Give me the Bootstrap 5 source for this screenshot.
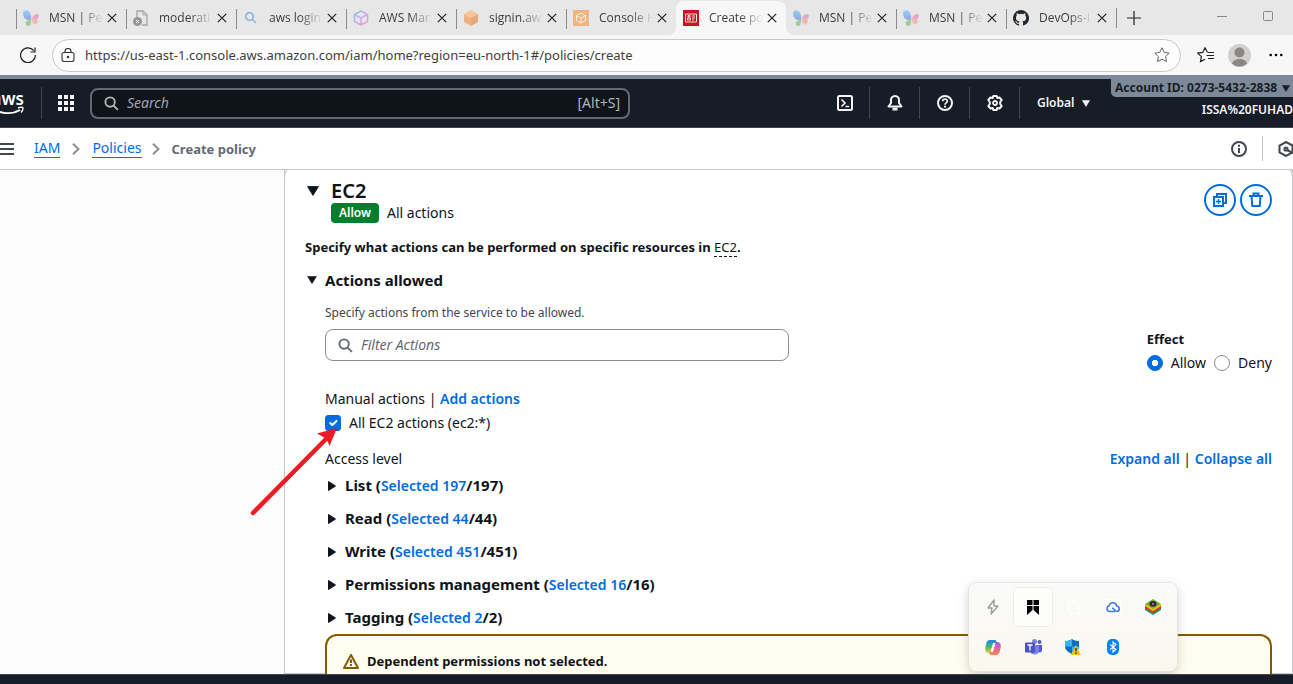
<!DOCTYPE html>
<html lang="en">
<head>
<meta charset="utf-8">
<meta name="viewport" content="width=device-width, initial-scale=1">
<title>Create policy</title>
<link rel="stylesheet" href="https://cdn.jsdelivr.net/npm/bootstrap@5.3.0/dist/css/bootstrap.min.css">
<style>
:root{--ink:#0f141a;--navy:#161d26;--blue:#006ce0;--line:#c6c6cd;--grey:#424650}
body{font:14px/20px "Noto Sans",sans-serif;color:var(--ink);background:#fff}
.app{height:100vh;overflow:hidden}
.app>*{flex-shrink:0}
.app>main{flex-shrink:1;min-height:0}
svg{display:block;flex:none}
.chrome{font-family:"Open Sans",sans-serif;color:#3c3c3c}
button{color:inherit}
.plain{border:0;background:none;padding:0;display:flex;align-items:center}
/* browser tabs */
.tabs{height:35px;background:#e7e7e7;padding-left:16px}
.tab{width:110px;height:34px;padding-left:7px;position:relative;font-size:12px}
.tab::before{content:"";position:absolute;left:0;top:8px;height:20px;border-left:1px solid #8b8b8b}
.tab.on::before,.tab.after::before{display:none}
.tab.on{background:#f7f7f7;border-radius:8px 8px 0 0;align-self:flex-end}
.tab.on::after{content:"";position:absolute;left:-8px;right:-8px;bottom:0;height:8px;
 background:radial-gradient(circle at 0 0,transparent 8px,#f7f7f7 8px) left/8px 8px no-repeat,radial-gradient(circle at 100% 0,transparent 8px,#f7f7f7 8px) right/8px 8px no-repeat}
.tab-name{width:58px;margin-left:10px;margin-right:-8px;white-space:nowrap;-webkit-mask:linear-gradient(90deg,#000 30px,transparent 54px);mask:linear-gradient(90deg,#000 30px,transparent 54px)}
.tab .fade-ico{opacity:.5}
.tab-end{border-left:1px solid #8b8b8b;height:20px;margin-right:10px}
.toolbar{height:40px;background:#f7f7f7;padding:0 10px 0 20px}
.omni{height:33px;border:1px solid #c8c8c8;border-radius:17px;background:#fdfdfd;padding:0 10px 0 8px}
.omni input{border:0;background:none;outline:0;font:13px "Noto Sans",sans-serif;color:#3f3f3f;min-width:0}
.me-person{margin:0 18px 0 14px}
/* console header */
.aws{height:53px;background:var(--navy);color:#f3f3f7;border-top:4px solid #7d8998;border-bottom:1px solid var(--grey)}
.aws-logo{width:25px;overflow:hidden;padding-right:1px}
.aws-word{font:600 17px/14px "Noto Sans",sans-serif}
.vline{border-left:1px solid #424650;height:32px}
.find{max-width:540px;height:31px;border:2px solid #656871;border-radius:8px;background:#0f141a;padding:0 8px 0 12px;color:#b4b4bb}
.find input,.filter input{border:0;outline:0;background:none;min-width:0;padding:0}
.find input::placeholder{color:#a4a4ad;font-style:italic;opacity:1}
.cell{width:50px;height:32px;justify-content:center;border-right:1px solid #424650}
.region{width:91px;padding-left:17px;font-size:12px;font-weight:600}
.acct{width:182px;font-size:12px;line-height:18px;font-weight:600}
.acct-id{background:#7d8998;color:var(--navy);border-radius:0 0 0 5px;padding:0 3px 0 4px;font-weight:700;white-space:nowrap}
/* breadcrumbs */
.crumbs{height:42px;border-bottom:1px solid var(--line)}
.crumbs a{color:var(--blue);text-decoration:none;border-bottom:1px solid var(--blue);line-height:18px}
.crumbs b{color:#656871;font-size:13px;margin-left:12px}
.crumbs .iam{margin:0 12px 0 20px}
.crumbs .pol{margin:0 10px 0 12px}
.crumbs .vr{margin:8px 15px}
/* editor */
.side{width:284px;background:#fcfcfd}
.editor{border:1px solid var(--line);border-top:0;position:relative;padding:8px 20px 0}
.editor::before{content:"";position:absolute;left:-1px;right:-1px;top:-8px;height:16px;border:1px solid var(--line);border-bottom:0;border-radius:16px 16px 0 0}
.fold{padding-left:2px}
.service{font:600 20px/25px "Noto Sans",sans-serif;margin:0}
.pill{background:#00802f;color:#fff;border-radius:4px;padding:0 8px;font-size:12px;font-weight:600;height:20px}
.tools{margin-top:6px}
.round{width:32px;height:32px;border:2px solid var(--blue);border-radius:50%;color:var(--blue);background:#fff;display:flex;align-items:center;justify-content:center;padding:0}
.t13{font:700 13px/22px "Noto Sans",sans-serif;margin:0}
.t15{font:700 15px/24px "Noto Sans",sans-serif;margin:0}
.specify{margin-top:13px}
.acts{margin-top:10px}
.acts .plain{width:20px;padding-left:2px}
.dash{font-weight:400;border-bottom:1px dashed var(--ink);text-decoration:none}
.body{padding:13px 0 0 20px}
.hint{font-size:12px;line-height:16px;color:var(--grey)}
.filter{width:49%;height:32px;border:1px solid #8c8c94;border-radius:8px;padding:0 12px}
.filter input::placeholder{color:#656871;font-style:italic;opacity:1}
.effect{line-height:20px}
.radios{padding-top:4px}
.manual{margin-top:16px}
.all{height:24px;margin-top:2px}
.access{margin-top:14px}
.link{color:var(--blue);font-size:14px;font-weight:600;text-decoration:none}
.form-check-input{width:16px;height:16px;margin:0;border-color:#8c8c94;flex:none}
.form-check-input:checked{background-color:var(--blue);border-color:var(--blue)}
.form-check-input[type=checkbox]{border-radius:3px}
.form-check-input[type=radio]:checked{background-image:radial-gradient(circle,#fff 3px,transparent 3px)}
.level{height:33px}
.tri{width:20px;padding-left:3px}
.warn{border:2px solid #855900;border-radius:12px 12px 0 0;border-bottom:0;background:#fffef0;height:60px;padding:14px 16px}
.foot{height:10px;background:var(--navy);border-top:1px solid var(--grey)}
.arrow{position:absolute;left:248px;top:256px}
.tray{position:absolute;right:116px;bottom:3px;width:208px;height:88px;border-radius:8px;background:linear-gradient(#fafafa,#faf8ee);box-shadow:0 0 1px 1px #e4e4e0,0 4px 12px #0003;display:grid;grid-template-columns:repeat(5,40px);grid-template-rows:40px 40px;padding:4px}
.tray>button{justify-content:center;border-radius:4px;margin:1px}
.tray>.sel{background:#fdfdfc;box-shadow:0 0 0 1px #eeede9}
</style>
</head>
<body>
<svg width="0" height="0" class="position-absolute" aria-hidden="true">
<defs>
<linearGradient id="g1" x1="0" y1="0" x2="0" y2="1"><stop offset="0" stop-color="#3cc0ee"/><stop offset=".6" stop-color="#4a80f0"/><stop offset="1" stop-color="#3a6fe0"/></linearGradient>
<linearGradient id="g2" x1="1" y1="0" x2="0" y2="1"><stop offset="0" stop-color="#b56ff0"/><stop offset=".4" stop-color="#f0609c"/><stop offset="1" stop-color="#ffd060"/></linearGradient>
<linearGradient id="g3" x1="0" y1="0" x2="1" y2="1"><stop offset="0" stop-color="#20b8f0"/><stop offset=".5" stop-color="#b070f0"/><stop offset="1" stop-color="#ff5aa0"/></linearGradient>
<linearGradient id="g4" x1="0" y1="0" x2="0" y2="1"><stop offset="0" stop-color="#1a87e0"/><stop offset=".5" stop-color="#3cb878"/><stop offset="1" stop-color="#f0d020"/></linearGradient>
<linearGradient id="g5" x1="0" y1="0" x2="0" y2="1"><stop offset="0" stop-color="#a05ae8"/><stop offset=".5" stop-color="#f0609c"/><stop offset="1" stop-color="#ff8a50"/></linearGradient>
<symbol id="x" viewBox="0 0 10 10"><path d="M.8.8l8.4 8.4M9.2.8L.8 9.2" stroke="#222" stroke-width="1.2"/></symbol>
<symbol id="msn" viewBox="0 0 16 16"><path d="M0 3C0-.5 4-.5 6 1.500c2 2 2.500 6 2 9L5 10C1 9 0 6 0 3z" fill="url(#g1)"/><path d="M8.500 11c-.5-3 2.500-7 5.500-7 3 0 2.500 4.500-1 5 2 .5 2 3.500 1 4.500-2 2-5 .5-5.500-2.500z" fill="url(#g2)"/><path d="M3 12c1-2 3-2 5-1.500 0 3-.5 5.500-2.500 5.500S2 14 3 12z" fill="#52b848"/></symbol>
<symbol id="find" viewBox="0 0 16 16"><circle cx="6.500" cy="6.500" r="5" fill="none" stroke="currentColor" stroke-width="2"/><path d="M10.200 10.200l4.600 4.600" stroke="currentColor" stroke-width="2"/></symbol>
<symbol id="down" viewBox="0 0 12 10"><path d="M.5.5h11L6 9.500z" fill="currentColor" stroke="currentColor" stroke-linejoin="round" stroke-width=".8"/></symbol>
<symbol id="right" viewBox="0 0 8 10"><path d="M.5.500v9L7.500 5z" fill="currentColor" stroke="currentColor" stroke-linejoin="round"/></symbol>
<symbol id="chev" viewBox="0 0 8 12"><path d="M1 .8L6.500 6 1 11.200" fill="none" stroke="#8c8c94" stroke-width="2"/></symbol>
</defs>
</svg>

<div class="app d-flex flex-column">
<div class="chrome">
 <div class="tabs d-flex align-items-center">
  <div class="tab d-flex align-items-center"><svg class="fade-ico" width="16" height="16"><use href="#msn"/></svg><span class="tab-name">MSN | Pe</span><button class="plain ms-2" aria-label="Close"><svg width="10" height="10"><use href="#x"/></svg></button></div>
  <div class="tab d-flex align-items-center"><svg width="16" height="16" viewBox="0 0 16 16"><path d="M4 7V1h6l4 4v10H9" fill="none" stroke="#a5a5a5" stroke-width="1.300"/><path d="M10 1v4h4" fill="none" stroke="#a5a5a5"/><circle cx="4.500" cy="11.500" r="4.500" fill="#969696"/><path d="M3 10l3 3m0-3l-3 3" stroke="#fff"/></svg><span class="tab-name">moderati</span><button class="plain ms-2" aria-label="Close"><svg width="10" height="10"><use href="#x"/></svg></button></div>
  <div class="tab d-flex align-items-center"><svg width="16" height="16" viewBox="0 0 16 16" fill="none" stroke="#86b8e3" stroke-width="1.700"><circle cx="6.500" cy="6.500" r="3.800"/><path d="M9.500 9.500L13 13"/></svg><span class="tab-name">aws login</span><button class="plain ms-2" aria-label="Close"><svg width="10" height="10"><use href="#x"/></svg></button></div>
  <div class="tab d-flex align-items-center"><svg class="fade-ico" width="16" height="16" viewBox="0 0 16 16"><path d="M8 1l6.500 3.500v7L8 15l-6.500-3.500v-7zM1.500 4.500L8 8l6.500-3.500M8 8v7" fill="none" stroke="url(#g3)" stroke-width="1.600" stroke-linejoin="round"/></svg><span class="tab-name">AWS Mar</span><button class="plain ms-2" aria-label="Close"><svg width="10" height="10"><use href="#x"/></svg></button></div>
  <div class="tab d-flex align-items-center"><svg width="16" height="16" viewBox="0 0 16 16"><path d="M8 0l7 4-7 4-7-4z" fill="#f3c797"/><path d="M1 4l7 4v8l-7-4z" fill="#efb27e"/><path d="M15 4L8 8v8l7-4z" fill="#e9a877"/></svg><span class="tab-name">signin.aw</span><button class="plain ms-2" aria-label="Close"><svg width="10" height="10"><use href="#x"/></svg></button></div>
  <div class="tab d-flex align-items-center"><svg width="16" height="16" viewBox="0 0 16 16"><path d="M0 0h16v16H0z" fill="#efb580"/><path d="M8 3l4.500 2.500v5L8 13l-4.500-2.500v-5zM3.500 5.500L8 8l4.500-2.500M8 8v5" fill="none" stroke="#fff" stroke-opacity=".8"/></svg><span class="tab-name">Console H</span><button class="plain ms-2" aria-label="Close"><svg width="10" height="10"><use href="#x"/></svg></button></div>
  <div class="tab on d-flex align-items-center"><svg width="16" height="16" viewBox="0 0 16 16"><path d="M0 0h16v16H0z" fill="#cf1124"/><path d="M2.500 4h11v8h-11zM4.500 10V8h3v2zM5 5.500h2V7H5zM9 6h3M9 8h3M9 10h2" fill="none" stroke="#fff" stroke-opacity=".85"/></svg><span class="tab-name">Create po</span><button class="plain ms-2" aria-label="Close"><svg width="10" height="10"><use href="#x"/></svg></button></div>
  <div class="tab after d-flex align-items-center"><svg class="fade-ico" width="16" height="16"><use href="#msn"/></svg><span class="tab-name">MSN | Pe</span><button class="plain ms-2" aria-label="Close"><svg width="10" height="10"><use href="#x"/></svg></button></div>
  <div class="tab d-flex align-items-center"><svg class="fade-ico" width="16" height="16"><use href="#msn"/></svg><span class="tab-name">MSN | Pe</span><button class="plain ms-2" aria-label="Close"><svg width="10" height="10"><use href="#x"/></svg></button></div>
  <div class="tab d-flex align-items-center"><svg width="16" height="16" viewBox="0 0 16 16"><path fill="#24292f" d="M8 0a8 8 0 0 0-2.530 15.590c.4.070.55-.17.550-.38v-1.490c-2.010.37-2.530-.49-2.690-.94-.09-.23-.48-.94-.82-1.130-.28-.15-.68-.52-.01-.53.63-.01 1.080.58 1.230.82.72 1.210 1.870.87 2.330.66.070-.52.280-.87.510-1.070-1.780-.2-3.640-.89-3.640-3.950 0-.87.310-1.590.82-2.150-.08-.2-.36-1.020.08-2.120 0 0 .67-.21 2.200.82a7.600 7.600 0 0 1 4 0c1.530-1.040 2.200-.82 2.200-.82.44 1.100.160 1.920.08 2.120.51.56.82 1.270.82 2.150 0 3.070-1.870 3.750-3.650 3.950.29.25.54.730.54 1.480v2.200c0 .21.150.46.55.38A8 8 0 0 0 8 0z"/></svg><span class="tab-name">DevOps-I</span><button class="plain ms-2" aria-label="Close"><svg width="10" height="10"><use href="#x"/></svg></button></div>
  <div class="tab-end"></div>
  <button class="plain" aria-label="New tab"><svg width="14" height="14" viewBox="0 0 14 14"><path d="M7 0v14M0 7h14" stroke="#222" stroke-width="1.200"/></svg></button>
  <div class="d-flex ms-auto me-3 pe-1 pb-1 align-items-center"><button class="plain me-4" aria-label="Minimize"><svg width="10" height="10"><path d="M0 5.500h10" stroke="#888"/></svg></button><button class="plain ms-2 ps-1" aria-label="Maximize"><svg width="10" height="10"><rect x=".5" y=".5" width="9" height="9" rx="1" fill="none" stroke="#888"/></svg></button></div>
 </div>
 <div class="toolbar d-flex align-items-center">
  <button class="plain me-3" aria-label="Refresh"><svg width="16" height="16" viewBox="0 0 16 16" fill="none" stroke="#222" stroke-width="1.200"><path d="M13.800 3.600A7.400 7.400 0 1 0 15.400 8M15 .5V5h-4.500"/></svg></button>
  <div class="omni d-flex align-items-center flex-grow-1">
   <svg width="14" height="14" viewBox="0 0 14 14" fill="none" stroke="#333" stroke-width="1.100"><rect x="1" y="4.500" width="12" height="9" rx="2"/><path d="M4 4.500V3.500a3 3 0 0 1 6 0v1"/><circle cx="7" cy="9" r=".7" fill="#333"/></svg>
   <input class="flex-grow-1 ms-2" aria-label="Address" value="https://us-east-1.console.aws.amazon.com/iam/home?region=eu-north-1#/policies/create">
   <button class="plain" aria-label="Favorite"><svg width="16" height="16" viewBox="0 0 16 16"><path d="M8 .8l2.200 4.600 5 .7-3.600 3.500.9 5L8 12.200l-4.500 2.400.9-5L.8 6.100l5-.7z" fill="none" stroke="#666"/></svg></button>
  </div>
  <button class="plain ms-3" aria-label="Favorites"><svg width="17" height="16" viewBox="0 0 17 16" fill="none" stroke="#222" stroke-width="1.200"><path d="M10.500 5.500L8 .8 5.700 5.400.8 6.100l3.600 3.500-.9 5L8 12.200M11 5.500h6M9.500 8.500H17M11 11.500h6"/></svg></button>
  <button class="plain me-person" aria-label="Profile"><svg width="23" height="23" viewBox="0 0 23 23"><circle cx="11.500" cy="11.500" r="11.500" fill="#d2d0ce"/><circle cx="11.500" cy="8.500" r="5" fill="#8a8886"/><path d="M4 19.800c1-6.400 14-6.400 15 0a11.500 11.500 0 0 1-15 0z" fill="#8a8886"/></svg></button>
  <button class="plain" aria-label="Settings"><svg width="14" height="4"><circle cx="1.700" cy="2" r="1.300"/><circle cx="7" cy="2" r="1.300"/><circle cx="12.300" cy="2" r="1.300"/></svg></button>
 </div>
</div>

<header class="aws d-flex">
 <div class="d-flex align-items-center flex-grow-1">
  <a href="#" class="aws-logo d-flex flex-column align-items-end text-decoration-none text-white"><span class="aws-word">aws</span><svg width="34" height="9" viewBox="0 0 34 9" fill="none" stroke="#fff"><path d="M2 2c9 6.500 20 6.500 28 2" stroke-width="1.800"/><path d="M28 2c2-1 5-1 5 0s-.5 3-2 4.500" stroke-width="1.400"/></svg></a>
  <div class="vline ms-3"></div>
  <button class="plain ms-3" aria-label="Services"><svg width="16" height="16" fill="#f3f3f7"><path d="M0 0h4v4H0zM6 0h4v4H6zM12 0h4v4h-4zM0 6h4v4H0zM6 6h4v4H6zM12 6h4v4h-4zM0 12h4v4H0zM6 12h4v4H6zM12 12h4v4h-4z"/></svg></button>
  <div class="find d-flex align-items-center flex-grow-1 ms-3"><svg width="15" height="15"><use href="#find"/></svg><input class="flex-grow-1 ms-2" type="search" placeholder="Search" aria-label="Search"><span>[Alt+S]</span></div>
 </div>
 <div class="d-flex align-items-center">
  <button class="plain cell" aria-label="CloudShell"><svg width="16" height="16" viewBox="0 0 16 16" fill="none" stroke="currentColor" stroke-width="2"><rect x="1" y="1" width="14" height="14" rx="1.500"/><path d="M4.500 4.500L8 8l-3.500 3.500M8.500 11.500H12" stroke-width="1.700"/></svg></button>
  <button class="plain cell" aria-label="Notifications"><svg width="16" height="16" viewBox="0 0 16 16" fill="none" stroke="currentColor" stroke-width="2" stroke-linejoin="round"><path d="M8 1C5.500 1 4 3 4 5v3l-2.500 3.500h13L12 8V5c0-2-1.500-4-4-4z"/><path d="M5.500 14h5" stroke-width="3"/></svg></button>
  <button class="plain cell" aria-label="Help"><svg width="16" height="16" viewBox="0 0 16 16" fill="none" stroke="currentColor" stroke-width="2"><circle cx="8" cy="8" r="7"/><path d="M5.700 6.300C5.700 3.500 10.400 3.500 10.300 6.200 10.200 8 8 7.700 8 9.700" stroke-width="1.700"/><path d="M8 10.800v1.700"/></svg></button>
  <button class="plain cell" aria-label="Settings"><svg width="16" height="16" viewBox="0 0 16 16" fill="none" stroke="currentColor" stroke-width="2" stroke-linejoin="round"><path d="M6.300 1h3.400l.5 2 2.300-.5L14.700 5l-1.500 2v2l1.500 2-2.200 2.500-2.300-.5-.5 2H6.300l-.5-2-2.300.5L1.300 11l1.500-2V7L1.300 5l2.200-2.500 2.300.5z"/><circle cx="8" cy="8" r="2" stroke-width="1.800"/></svg></button>
  <button class="plain region">Global<svg class="ms-2" width="8" height="7"><use href="#down"/></svg></button>
 </div>
 <div class="acct"><div class="acct-id d-flex align-items-center justify-content-between">Account ID: 0273-5432-2838<svg width="8" height="7"><use href="#down"/></svg></div><div class="text-end mt-1">ISSA%20FUHAD</div></div>
</header>

<nav class="crumbs d-flex align-items-center" aria-label="breadcrumb">
 <button class="plain" aria-label="Menu"><svg width="14" height="12"><path d="M0 1h14M0 6h14M0 11h14" stroke="#424650" stroke-width="2"/></svg></button>
 <a href="#" class="iam">IAM</a><svg width="8" height="12"><use href="#chev"/></svg><a href="#" class="pol">Policies</a><svg width="8" height="12"><use href="#chev"/></svg><b>Create policy</b>
 <button class="plain ms-auto" aria-label="Info"><svg width="16" height="16" viewBox="0 0 16 16" fill="none" stroke="#424650" stroke-width="2"><circle cx="8" cy="8" r="7"/><path d="M8 3.800v2M8 7v5"/></svg></button>
 <div class="vr"></div>
 <button class="plain overflow-hidden" aria-label="Diagnostics"><svg width="15" height="16" viewBox="0 0 15 16" fill="none" stroke="#424650" stroke-width="2"><path d="M14.500 4.500L8 1 1.500 4.500v7L8 15l6.500-3.500z"/><circle cx="8" cy="8" r="1.600"/><path d="M9 9l6 3"/></svg></button>
</nav>

<main class="d-flex flex-grow-1 overflow-hidden position-relative">
 <div class="side flex-shrink-0"></div>
 <section class="editor flex-grow-1">
  <div class="d-flex justify-content-between">
   <div class="d-flex">
    <button class="plain fold align-self-start mt-2" aria-label="Collapse EC2"><svg class="me-2" width="12" height="10"><use href="#down"/></svg></button>
    <div class="ms-1"><h2 class="service">EC2</h2><div class="d-flex align-items-center"><span class="pill">Allow</span><span class="ms-2">All actions</span></div></div>
   </div>
   <div class="tools d-flex gap-1"><button class="round" aria-label="Clone"><svg width="14" height="14" viewBox="0 0 14 14" fill="none" stroke="currentColor" stroke-width="2"><path d="M4 3V1h9v9h-2"/><path d="M1 4h9v9H1z"/><path d="M5.500 6v5M3 8.500h5" stroke-width="1.500"/></svg></button><button class="round" aria-label="Delete"><svg width="14" height="16" viewBox="0 0 14 16" fill="none" stroke="currentColor" stroke-width="2"><path d="M0 4h14M4.500 4V1.500h5V4M2.500 4.500l.8 9.500h7.400l.8-9.500"/></svg></button></div>
  </div>
  <p class="t13 specify">Specify what actions can be performed on specific resources in <a href="#" class="dash text-reset">EC2</a>.</p>
  <h3 class="t15 d-flex align-items-center acts"><button class="plain" aria-label="Collapse actions"><svg width="10" height="8"><use href="#down"/></svg></button>Actions allowed</h3>
  <div class="body">
   <label class="hint d-block" for="filter">Specify actions from the service to be allowed.</label>
   <div class="d-flex justify-content-between align-items-start mt-2">
    <div class="filter d-flex align-items-center"><svg width="15" height="15" color="#656871"><use href="#find"/></svg><input id="filter" class="flex-grow-1 ms-2" placeholder="Filter Actions"></div>
    <fieldset><legend class="t13 effect">Effect</legend>
     <div class="d-flex align-items-center radios"><input class="form-check-input" type="radio" name="effect" id="allow" checked><label for="allow" class="mx-2">Allow</label><input class="form-check-input" type="radio" name="effect" id="deny"><label for="deny" class="ms-2">Deny</label></div></fieldset>
   </div>
   <div class="manual">Manual actions | <a href="#" class="link">Add actions</a></div>
   <div class="d-flex align-items-center all"><input class="form-check-input" type="checkbox" id="all" checked><label for="all" class="ms-2">All EC2 actions (ec2:*)</label></div>
   <div class="d-flex justify-content-between access"><span>Access level</span><span><a href="#" class="link">Expand all</a> | <a href="#" class="link">Collapse all</a></span></div>
   <div class="level t15 d-flex align-items-center"><button class="plain tri" aria-label="Expand List"><svg width="8" height="10"><use href="#right"/></svg></button><span>List (<a href="#" class="link">Selected 197</a>/197)</span></div>
   <div class="level t15 d-flex align-items-center"><button class="plain tri" aria-label="Expand Read"><svg width="8" height="10"><use href="#right"/></svg></button><span>Read (<a href="#" class="link">Selected 44</a>/44)</span></div>
   <div class="level t15 d-flex align-items-center"><button class="plain tri" aria-label="Expand Write"><svg width="8" height="10"><use href="#right"/></svg></button><span>Write (<a href="#" class="link">Selected 451</a>/451)</span></div>
   <div class="level t15 d-flex align-items-center"><button class="plain tri" aria-label="Expand Permissions management"><svg width="8" height="10"><use href="#right"/></svg></button><span>Permissions management (<a href="#" class="link">Selected 16</a>/16)</span></div>
   <div class="level t15 d-flex align-items-center"><button class="plain tri" aria-label="Expand Tagging"><svg width="8" height="10"><use href="#right"/></svg></button><span>Tagging (<a href="#" class="link">Selected 2</a>/2)</span></div>
   <div class="warn d-flex align-items-start t13"><svg class="me-2 mt-1" width="16" height="15" viewBox="0 0 16 15" fill="none" stroke="#855900" stroke-width="2" stroke-linejoin="round"><path d="M8 1l7 13H1z"/><path d="M8 5.500v3.500M8 10v2"/></svg>Dependent permissions not selected.</div>
  </div>
 </section>
 <svg class="arrow" width="92" height="94" viewBox="0 0 92 94"><path d="M5 87L79 12" stroke="#ed1c24" stroke-width="4.500" stroke-linecap="round"/><path d="M89 2L69 7.500l7 4 3.500 3.500 2 5z" fill="#ed1c24"/></svg>
 <div class="tray">
  <button class="plain" aria-label="Power"><svg width="12" height="16" viewBox="0 0 12 16"><path d="M7 1L1 9h4l-1 6 7-8H7z" fill="none" stroke="#a0a0a0" stroke-width="1.500" stroke-linejoin="round"/></svg></button>
  <button class="plain sel" aria-label="Bookmark app"><svg width="12" height="16"><path d="M0 1h5.500v5H0zM6.500 1H12v5H6.500zM0 7h5.500v4L0 16zM6.500 7H12v9l-5.500-5z"/></svg></button>
  <button class="plain" aria-label="Windows"><svg width="16" height="16" fill="none" stroke="#fff"><path d="M2.500 12V1.500H12M4.500 3.500h10v11h-10z"/></svg></button>
  <button class="plain" aria-label="Cloud"><svg width="16" height="16" viewBox="0 0 16 16"><rect width="16" height="16" rx="2" fill="#fff"/><path d="M10 12.500H4A3 3 0 0 1 4 6.800 4 4 0 0 1 11.800 7a2.800 2.800 0 0 1 .2 5.500c-2 0-2.500-3-5-3.500" fill="none" stroke="#3b78e7" stroke-width="1.600"/></svg></button>
  <button class="plain" aria-label="BlueStacks"><svg width="18" height="16" viewBox="0 0 18 16"><path d="M1 11l8 5 8-5V9H1z" fill="#15986e"/><path d="M1 9l8 5 8-5V7H1z" fill="#e4332b"/><path d="M1 7l8 5 8-5V5H1z" fill="#ffc20e"/><path d="M1 5l8-5 8 5-8 5z" fill="#72b626"/><ellipse cx="9" cy="4.800" rx="3.500" ry="2.800" fill="#2b2347"/><circle cx="9" cy="4.800" r="1.100" fill="#c268b6"/></svg></button>
  <button class="plain" aria-label="Copilot"><svg width="16" height="15" viewBox="0 0 16 15"><path d="M5 0h5c1 0 1.500 1 2 3H8L6 11c-.5 2-1 2-2 2-3 0-4.500-2-3.500-6s1-7 4.500-7z" fill="url(#g4)"/><path d="M11 15H6c-1 0-1.500-1-2-3h4l2-8c.5-2 1-2 2-2 3 0 4.500 2 3.500 6s-1 7-4.500 7z" fill="url(#g5)"/><path d="M8 5h2L8 10H6z" fill="#fff"/></svg></button>
  <button class="plain" aria-label="Teams"><svg width="17" height="16" viewBox="0 0 17 16"><circle cx="14.500" cy="3" r="2" fill="#5059c9"/><circle cx="9.500" cy="2.500" r="2.500" fill="#7b83eb"/><path d="M12 6h5v5c0 2-2 3-4 2z" fill="#5059c9"/><path d="M5 6h9v5c0 6-9 6-9 0z" fill="#7b83eb"/><rect y="3.500" width="10" height="10" rx="1" fill="#4b53bc"/><path d="M2.500 6h5M5 6v5.500" stroke="#fff" stroke-width="1.300"/></svg></button>
  <button class="plain" aria-label="Windows Security"><svg width="16" height="16" viewBox="0 0 16 16"><path d="M7 0c2 1.500 4 2 7 2v5c0 4-3 6-7 8-4-2-7-4-7-8V2c3 0 5-.5 7-2z" fill="#0f6cbd"/><path d="M7 0v7.500H0V2c3 0 5-.5 7-2zM7 7.500h7c0 4-3 6-7 7.500z" fill="#31b5ee"/><path d="M11 6l5 10H6z" fill="#ffc20e"/><path d="M11 9v3.500M11 13.500V15" stroke="#222" stroke-width="1.300"/></svg></button>
  <button class="plain" aria-label="Bluetooth"><svg width="12" height="16" viewBox="0 0 12 16"><rect width="12" height="16" rx="5" fill="#0082fc"/><path d="M3 5.300l6 5.200L6 13V3l3 2.500-6 5.200" fill="none" stroke="#fff" stroke-width="1.100"/></svg></button>
 </div>
</main>
<footer class="foot"></footer>
</div>
<script src="https://cdn.jsdelivr.net/npm/bootstrap@5.3.0/dist/js/bootstrap.bundle.min.js"></script>
</body>
</html>
